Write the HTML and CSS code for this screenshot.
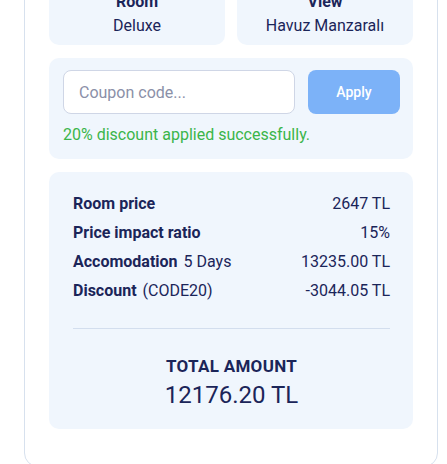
FILE: index.html
```html
<!DOCTYPE html>
<html>
<head>
<meta charset="utf-8">
<link rel="stylesheet" href="styles.css">
</head>
<body>
<div class="panel">
  <div class="info-grid">
    <div class="info-card">
      <div class="info-label">Room</div>
      <div class="info-value">Deluxe</div>
    </div>
    <div class="info-card">
      <div class="info-label">View</div>
      <div class="info-value">Havuz Manzaralı</div>
    </div>
  </div>

  <div class="coupon-card">
    <div class="coupon-row">
      <input class="coupon-input" type="text" placeholder="Coupon code...">
      <button class="apply-btn">Apply</button>
    </div>
    <div class="coupon-msg">20% discount applied successfully.</div>
  </div>

  <div class="summary-card">
    <div class="rows">
      <div class="row"><span class="row-label">Room price</span><span class="row-value">2647 TL</span></div>
      <div class="row"><span class="row-label">Price impact ratio</span><span class="row-value">15%</span></div>
      <div class="row"><span class="row-label">Accomodation <span class="row-sub">5 Days</span></span><span class="row-value">13235.00 TL</span></div>
      <div class="row"><span class="row-label">Discount <span class="row-sub">(CODE20)</span></span><span class="row-value">-3044.05 TL</span></div>
    </div>
    <div class="divider"></div>
    <div class="total">
      <div class="total-label">TOTAL AMOUNT</div>
      <div class="total-value">12176.20 TL</div>
    </div>
  </div>
</div>
</body>
</html>
```

FILE: styles.css
```css
* { box-sizing: border-box; }
html, body { margin: 0; padding: 0; background: #ffffff; overflow: hidden; }
body {
  font-family: Roboto, "Liberation Sans", sans-serif;
  color: #1b2559;
}
.panel {
  margin: -43px 0 0 24px;
  width: 414px;
  border: 1px solid #d7e1ee;
  border-radius: 14px;
  padding: 24px 24px 37px 24px;
  display: flex;
  flex-direction: column;
  gap: 13px;
}
.info-grid {
  display: grid;
  grid-template-columns: 1fr 1fr;
  gap: 12px;
}
.info-card {
  background: #f0f6fd;
  border-radius: 10px;
  padding: 10px 12px 9px;
  text-align: center;
  display: flex;
  flex-direction: column;
  gap: 4px;
}
.info-label { font-weight: 700; font-size: 16px; line-height: 20px; }
.info-value { font-size: 16px; line-height: 20px; }

.coupon-card {
  background: #f0f6fd;
  border-radius: 10px;
  padding: 12px 13px 14px 14px;
}
.coupon-row {
  display: grid;
  grid-template-columns: 232px 1fr;
  gap: 13px;
}
.coupon-input {
  width: 100%;
  min-width: 0;
  height: 44px;
  border: 1px solid #cfd6e6;
  border-radius: 8px;
  background: #ffffff;
  padding: 0 15px;
  font-family: inherit;
  font-size: 16px;
  color: #1b2559;
  outline: none;
}
.coupon-input::placeholder { color: #8b90a8; }
.apply-btn {
  width: 100%;
  height: 44px;
  border: none;
  border-radius: 8px;
  background: #7cb2f8;
  color: #ffffff;
  font-family: inherit;
  font-weight: 500;
  font-size: 14px;
}
.coupon-msg {
  margin-top: 11px;
  font-size: 16px;
  line-height: 20px;
  color: #3bb54a;
}

.summary-card {
  background: #f0f6fd;
  border-radius: 10px;
  padding: 22px 23px 20px 24px;
}
.rows {
  display: flex;
  flex-direction: column;
  gap: 9px;
}
.row {
  display: flex;
  justify-content: space-between;
  font-size: 16px;
  line-height: 20px;
}
.row-label { font-weight: 700; }
.row-sub { font-weight: 400; margin-left: 2px; }
.divider {
  margin-top: 27px;
  height: 1px;
  background: #d3deee;
}
.total {
  margin-top: 27px;
  text-align: center;
}
.total-label {
  font-weight: 700;
  font-size: 17px;
  letter-spacing: 0.3px;
  line-height: 20px;
}
.total-value {
  margin-top: 5px;
  font-size: 24px;
  line-height: 28px;
}
```
